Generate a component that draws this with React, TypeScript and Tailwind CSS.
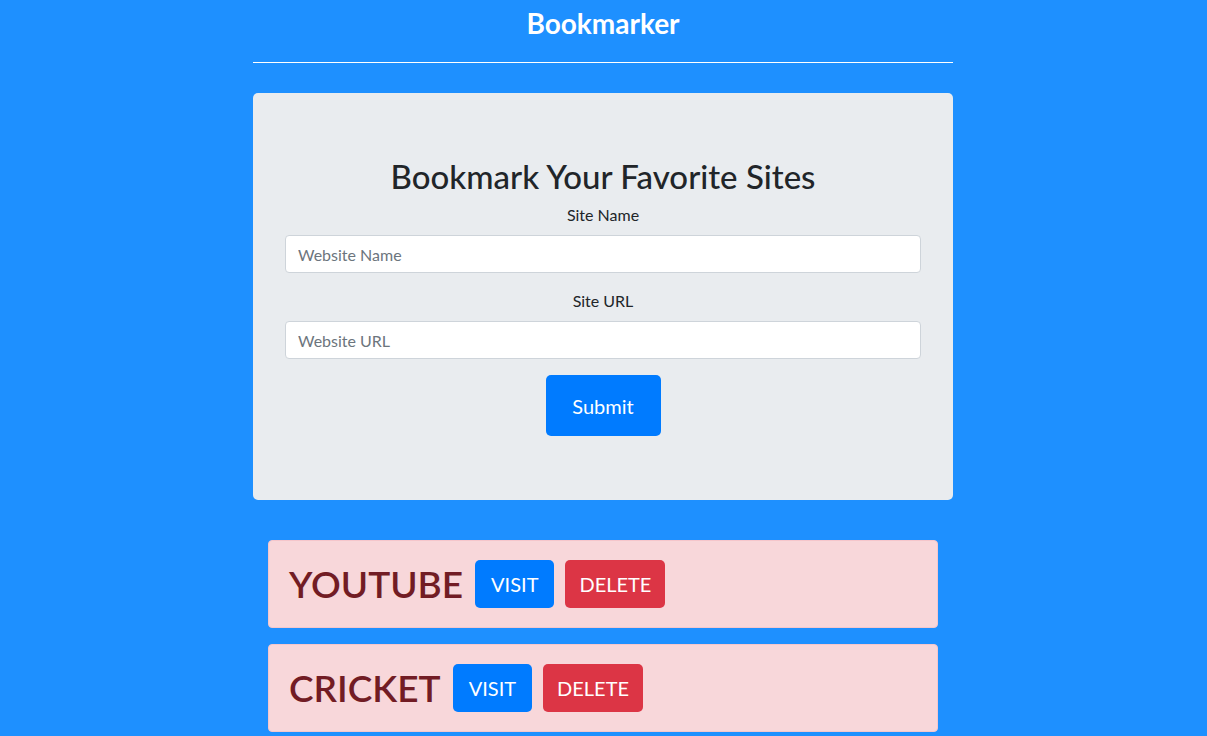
import React from 'react';

const bookmarks = [
  { name: 'YOUTUBE', url: 'https://youtube.com' },
  { name: 'CRICKET', url: 'https://cricbuzz.com' },
];

export default function App() {
  return (
    <div className="min-h-screen bg-[#1e90ff] font-['Lato','Segoe_UI','Noto_Sans',sans-serif] text-[#212529]">
      <div className="ml-[253px] w-[700px]">
        {/* header */}
        <h3 className="pt-[6px] text-center text-[28px] font-bold leading-[34px] text-white">Bookmarker</h3>
        <hr className="mt-[22px] border-t border-white" />

        {/* form box */}
        <div className="mt-[30px] rounded-[5px] bg-[#e9ecef] px-8 pt-16 pb-16 text-center">
          <h2 className="text-[33px] font-medium leading-[38px]">Bookmark Your Favorite Sites</h2>
          <form className="mt-2" onSubmit={(e) => e.preventDefault()}>
            <div className="mb-4">
              <label className="mb-2 block text-base leading-6">Site Name</label>
              <input
                type="text"
                placeholder="Website Name"
                className="block h-[38px] w-full rounded-[4px] border border-[#ced4da] bg-white px-3 text-base text-[#495057] placeholder:text-[#6c757d]"
              />
            </div>
            <div className="mb-4">
              <label className="mb-2 block text-base leading-6">Site URL</label>
              <input
                type="text"
                placeholder="Website URL"
                className="block h-[38px] w-full rounded-[4px] border border-[#ced4da] bg-white px-3 text-base text-[#495057] placeholder:text-[#6c757d]"
              />
            </div>
            <button
              type="submit"
              className="h-[61px] w-[115px] rounded-[5px] bg-[#007bff] text-xl text-white"
            >
              Submit
            </button>
          </form>
        </div>

        {/* bookmark list */}
        <div className="mt-10 space-y-4 px-[15px]">
          {bookmarks.map((b) => (
            <div
              key={b.name}
              className="flex h-[88px] items-center rounded-[4px] border border-[#f5c6cb] bg-[#f8d7da] px-5 text-[#721c24]"
            >
              <h1 className="text-[37px] font-semibold leading-[48px]">{b.name}</h1>
              <a
                href={b.url}
                className="ml-3 flex h-12 items-center rounded-[5px] bg-[#007bff] px-4 text-xl text-white"
              >
                VISIT
              </a>
              <button className="ml-[11px] flex h-12 items-center rounded-[5px] bg-[#dc3545] px-[14px] text-xl text-white">
                DELETE
              </button>
            </div>
          ))}
        </div>
      </div>
    </div>
  );
}
